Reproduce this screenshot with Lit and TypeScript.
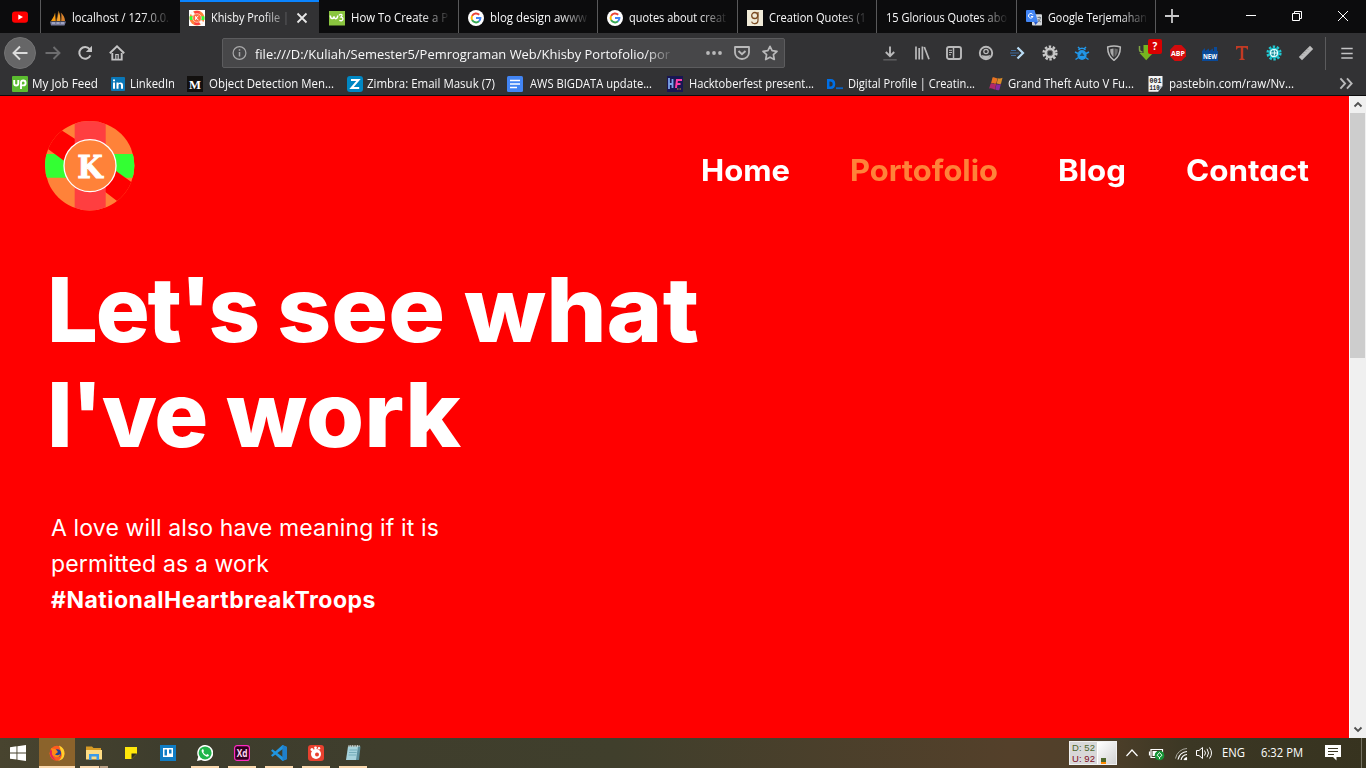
import { LitElement, html, css, svg, nothing } from "lit";
import { customElement, property } from "lit/decorators.js";
import { styleMap } from "lit/directives/style-map.js";

/** One line of text that spans `w` pixels, by tracking or, with `stretch`, by glyph width. */
@customElement("fit-text")
class FitText extends LitElement {
  @property({ type: Number }) w = 0;
  @property() text = "";
  @property({ type: Boolean }) stretch = false;
  static styles = css`
    :host { display: inline-block; white-space: pre; flex: none; }
    .t { display: inline-block; transform-origin: 0 50%; }
  `;
  render() {
    return html`<span class="t">${this.text}</span>`;
  }
  firstUpdated() {
    this.fit();
    document.fonts?.ready.then(() => this.fit());
  }
  fit() {
    const el = this.renderRoot.querySelector(".t") as HTMLElement;
    el.style.letterSpacing = "0px";
    el.style.transform = "none";
    const natural = el.getBoundingClientRect().width;
    if (this.stretch) {
      this.style.width = this.w + "px";
      el.style.transform = `scaleX(${(this.w / natural).toFixed(4)})`;
    } else {
      el.style.letterSpacing = ((this.w - natural) / this.text.length).toFixed(3) + "px";
    }
  }
}

const ico = (body: unknown, size = 16) =>
  html`<svg class="ico" width=${size} height=${size} viewBox="0 0 16 16">${body}</svg>`;

const gear = (color: string, hole: unknown) => svg`
  <circle cx="8" cy="8" r="5.4" fill=${color}/>
  <circle cx="8" cy="8" r="6.4" fill="none" stroke=${color} stroke-width="2.4" stroke-dasharray="2.4 1.62"/>
  ${hole}`;

const google = svg`
  <circle cx="8" cy="8" r="8" fill="#fff"/>
  <path d="M4.1 5.9A4.5 4.5 0 0 1 11.2 4.8" fill="none" stroke="#ea4335" stroke-width="2"/>
  <path d="M4.1 5.9A4.5 4.5 0 0 0 4.1 10.1" fill="none" stroke="#fbbc05" stroke-width="2"/>
  <path d="M4.1 10.1A4.5 4.5 0 0 0 11 11.3" fill="none" stroke="#34a853" stroke-width="2"/>
  <path d="M8 8H12.4A4.5 4.5 0 0 1 10.9 11.3" fill="none" stroke="#4285f4" stroke-width="2"/>`;

const youtube = svg`<rect y="2.4" width="16" height="11.4" rx="3" fill="#f00"/><path d="M6.3 5.4 11 8.1 6.3 10.8Z" fill="#fff"/>`;
const phpmyadmin = svg`
  <path d="M1 11C2 9 4 7 5 3L6 11Z" fill="#f89c0e"/>
  <path d="M6.2 11C7.5 7 8 4 8.500 .8C10 4 10.600 8 10.500 11Z" fill="#f5a12b"/>
  <path d="M11 11C11.500 7 11.300 5 10.800 2.500C13.500 5 15 8 15 11Z" fill="#d9822b"/>
  <path d="M5.200 3 6 11M8.600 1 6.300 11M11 3 11 11" stroke="#5b3a1a" stroke-width=".6"/>
  <path d="M0 11.500H16L14.500 15.500H1Z" fill="#777b9c"/>
  <path d="M2 13H5M6.500 13H9.500M11 13H14" stroke="#c9cce0" stroke-width="1"/>`;
const khisby = svg`
  <rect width="16" height="16" fill="#fff"/><circle cx="8" cy="8" r="7.5" fill="#ff8239"/>
  <path d="M5.500 1H10.500V15H5.500Z" fill="#ff3e40"/><path d="M.6 6.200H4V10H.8ZM12 6.200H15.400V10H12Z" fill="#3f3"/>
  <path d="M1.800 3.500 4 1.500 6 4 3 6ZM14.200 12.500 12 14.500 10 12 13 10Z" fill="#fff"/>
  <circle cx="8" cy="8" r="4.300" fill="#ff6a3c" stroke="#ffd9c4" stroke-width=".8"/>
  <path d="M6.700 6V10M9.400 6 6.900 8 9.500 10" stroke="#fff" fill="none"/>`;
const w3 = svg`<rect y="1" width="16" height="14.500" fill="#8ac53f"/>
  <path d="M1.300 5.500C1.500 9.500 4.500 9.500 5 6.300C5 9.500 8.500 9.600 8.800 5.500" stroke="#fff" stroke-width="1.500" fill="none"/>
  <path d="M10 5.300C12 3.500 14.500 4.500 12 7C15 7.200 14.500 12 10.300 10.400" stroke="#fff" stroke-width="1.300" fill="none"/>`;
const goodreads = svg`<rect width="16" height="16" fill="#f0ead7"/><circle cx="7.700" cy="5.500" r="3" fill="none" stroke="#7a4a22" stroke-width="1.300"/>
  <path d="M11 2V10.500C11 14.500 5.200 14.500 4.600 11.700" fill="none" stroke="#7a4a22" stroke-width="1.200"/>`;
const translate = svg`<rect x="6" y="4.200" width="10" height="11.300" rx="1" fill="#d5d8dc"/>
  <path d="M1 0H8.500L12 12H1Q0 12 0 11V1Q0 0 1 0Z" fill="#4285f4"/><path d="M8 12H12L9.500 15Z" fill="#2a56c6"/>
  <path d="M6.800 4.600A2.300 2.300 0 1 0 7 6.500H5" fill="none" stroke="#fff" stroke-width="1"/>
  <path d="M11.500 7.500H15M13.200 6.500V7.500M14.500 7.500C14 10 13 11 12 12M12 9C12.500 10.500 13.500 11.500 15 12" stroke="#6a737c" stroke-width=".9" fill="none"/>`;

const lbl = (t: string, x: number, y: number, fs: number, fill: string, len: number, fam = "Open Sans", w = 700) =>
  svg`<text x=${x} y=${y} font-family="${fam}, sans-serif" font-weight=${w} font-size=${fs} fill=${fill} textLength=${len} lengthAdjust="spacingAndGlyphs">${t}</text>`;

const TABS = [
  { x: 40, end: 180, icon: phpmyadmin, text: "localhost / 127.0.0.", w: 97, clip: 98 },
  { x: 180, end: 319, icon: khisby, text: "Khisby Profile |", w: 78, clip: 80, active: true },
  { x: 319, end: 458, icon: w3, text: "How To Create a P", w: 97, clip: 98 },
  { x: 458, end: 597, icon: google, text: "blog design awww", w: 97, clip: 98 },
  { x: 597, end: 737, icon: google, text: "quotes about creat", w: 97, clip: 98 },
  { x: 737, end: 876, icon: goodreads, text: "Creation Quotes (1", w: 97, clip: 98 },
  { x: 876, end: 1016, icon: null, text: "15 Glorious Quotes abo", w: 121, clip: 121 },
  { x: 1016, end: 1155, icon: translate, text: "Google Terjemahan", w: 99, clip: 99 },
];

const BOOKMARKS = [
  { x: 12, tx: 32, w: 66, text: "My Job Feed", icon: svg`<rect width="16" height="16" rx="1" fill="#5bbc2f"/><path d="M2.200 4V7.500Q2.200 9.500 4.200 9.500T6.300 7.500V4M9 13V6.800Q9 4.500 11.300 4.500T13.600 7Q13.600 9.400 11.300 9.400H9.500" fill="none" stroke="#fff" stroke-width="1.900"/>` },
  { x: 110, tx: 130, w: 45, text: "LinkedIn", icon: svg`<rect x="1" y="1" width="14" height="14" rx="1" fill="#0a77b7"/><path d="M3 6.500H5V12.800H3ZM3 3.500H5V5.300H3ZM6.500 6.500H8.500V7.400C9.500 5.900 13 6 13 9V12.800H11V9.500C11 7.600 8.500 7.600 8.500 9.500V12.800H6.500Z" fill="#fff"/>` },
  { x: 187, tx: 209, w: 125, text: "Object Detection Men...", icon: svg`<rect width="16" height="16" fill="#12100e"/>${lbl("M", 2, 12.6, 13, "#fff", 12, "Liberation Serif")}` },
  { x: 347, tx: 367, w: 128, text: "Zimbra: Email Masuk (7)", icon: svg`<rect width="16" height="16" rx="3" fill="#0087c3"/><path d="M4 3.900H11.500L4.500 12.100H12.200" fill="none" stroke="#fff" stroke-width="2"/>` },
  { x: 507, tx: 530, w: 122, text: "AWS BIGDATA update...", icon: svg`<rect width="16" height="16" rx="1.500" fill="#4285f4"/><path d="M3 4.500H13M3 8H13M3 11.500H10" stroke="#fff" stroke-width="1.500"/>` },
  { x: 667, tx: 689, w: 125, text: "Hacktoberfest present...", icon: svg`<rect width="16" height="16" fill="#191652"/><path d="M2 2V13M5.500 3V12M2 8H6" stroke="#7ba3e8" stroke-width="1.800"/><path d="M9 12 10 4H15M9.500 8H13.500" stroke="#ff3fa8" stroke-width="2" fill="none"/><path d="M10 13H14" stroke="#9a6b36" stroke-width="1.500" stroke-dasharray="1.500 1"/>` },
  { x: 827, tx: 848, w: 127, text: "Digital Profile | Creatin...", icon: svg`<path d="M1.200 4.200H3.500Q7 4.200 7 8T3.500 11.800H1.200Z" fill="none" stroke="#006fe6" stroke-width="2.500"/><path d="M9 12.200H16" stroke="#0b63c6" stroke-width="1.800"/>` },
  { x: 988, tx: 1008, w: 126, text: "Grand Theft Auto V Fu...", icon: svg`<path d="M4.500 1.500C7 .6 7.500 2.800 9.600 2L8.300 7.600C6.500 8.200 5.600 6.600 3 7.400Z" fill="#e87322"/><path d="M9.900 2.200C12 2.800 13 2.500 14.500 1.800L13 7.700C11.500 8.200 10.500 8.200 8.700 7.600Z" fill="#d98b28"/><path d="M2.700 7.600C5 7 6 8.600 8.200 7.800L7 13.400C5 13.500 3.500 11.500 1 12.700Z" fill="#b0286b"/><path d="M8.500 7.900C10.500 8.600 11.500 8.500 12.900 8L11.300 14C10 14.500 8.800 14.200 7.200 13.400Z" fill="#8b2aa0"/>` },
  { x: 1148, tx: 1169, w: 125, text: "pastebin.com/raw/Nv...", icon: svg`<path d="M.5 0H14.500V10L10 15.800H.5Z" fill="#f4f4f4"/><path d="M14.500 10H10V15.800Z" fill="#b7bfc6"/>${lbl("001", 1.5, 6.800, 7, "#222", 12, "Liberation Mono")}${lbl("110", 1.5, 13.600, 7, "#222", 10, "Liberation Mono")}` },
];

const g = "#b9b9ba";
const TOOLS = [
  svg`<path d="M8 1.500V11M3.800 7 8 11.200 12.200 7" fill="none" stroke=${g} stroke-width="1.900"/><path d="M1.300 14.800H14.700" stroke="#5a5a5c" stroke-width="1.600"/>`,
  svg`<path d="M2 1.500V14.500M5.200 3V14.500M8.400 1.500V14.500M10.300 2 15 14.300" stroke=${g} stroke-width="1.700" fill="none"/>`,
  svg`<rect x="1" y="2" width="14" height="12" rx="2" fill="none" stroke=${g} stroke-width="1.900"/><path d="M7.500 2V14" stroke=${g} stroke-width="1.500"/><path d="M3 5.300H6M3 7.500H6M3 9.700H5" stroke=${g}/>`,
  svg`<circle cx="8" cy="8" r="6.200" fill="none" stroke=${g} stroke-width="1.900"/><circle cx="8" cy="6.500" r="2.800" fill=${g}/><path d="M3.500 10Q8 11.500 12.500 10Q11 14 8 14T3.500 10Z" fill=${g}/><circle cx="8" cy="6.500" r="1.500" fill="#323234"/>`,
  svg`<path d="M1 5.500H6M0 8H9M1 10.500H6" stroke="#3e6b9c" stroke-width="1.100"/><path d="M7.500 2.500 13 8 7.500 13.500" fill="none" stroke="#b9dcf5" stroke-width="2.200"/>`,
  gear("#c9c9c9", svg`<circle cx="8" cy="8" r="2.800" fill="#323234" stroke="#777"/>`),
  svg`<ellipse cx="8" cy="10" rx="4.600" ry="5" fill="#2196e8"/><path d="M4.500 5Q8 1.500 11.500 5M4 2 6 4M12 2 10 4M1 7 4 8.500M15 7 12 8.500M1.500 14.500 4.500 12.500M14.500 14.500 11.500 12.500" stroke="#2196e8" stroke-width="1.500" fill="none"/><path d="M8 7.500 10.500 11H5.500Z" fill="#24506f"/>`,
  svg`<path d="M1.700 2Q8 .2 14.300 2Q14.500 11 8 15.300Q1.500 11 1.700 2Z" fill="none" stroke="#bbb" stroke-width="1.500"/><path d="M4.200 4.200Q6 3.500 7.500 3.500V12.300Q4 9 4.200 4.200Z" fill="#a9a9a9"/><path d="M8.500 3.500Q10 3.500 11.800 4.200Q12 9 8.500 12.300Z" fill="#6c6c6c"/>`,
  svg`<path d="M5.500 0H11V8H15L8.200 15.200 1.500 8H5.500Z" fill="#76b51f"/><path d="M1.500 1V4.500Q1.500 7 4.500 7" stroke="#7fa544" stroke-width="1.500" fill="none"/>`,
  svg`<path d="M4.700 0H11.300L16 4.700V11.300L11.300 16H4.700L0 11.300V4.700Z" fill="#d30b0d"/>${lbl("ABP", 1, 10.9, 7.8, "#fff", 14)}`,
  svg`<path d="M0 16V6L3 3V6L7 3.500V6L11 3.500V6H12V2H15V6H16V16Z" fill="#0a4a99"/>${lbl("NEW", 1, 14.2, 6.800, "#fff", 14)}`,
  svg`<path d="M2 1H14V4.500H13Q13 2.700 11 2.700H9.200V13Q9.200 14 10.700 14.300V15H5.300V14.300Q6.800 14 6.800 13V2.700H5Q3 2.700 3 4.500H2Z" fill="#c23a24"/>`,
  gear("#20c5cf", svg`<circle cx="8" cy="8" r="3.500" fill="#168b98" stroke="#e8ffff" stroke-width="1.200"/><path d="M5 8H11M8 5Q9.500 8 8 11" stroke="#e8ffff" fill="none"/>`),
  svg`<path d="M12 .8 15.200 4 4 15.200 .8 12Z" fill="#bdbdbd"/><path d="M9.500 4 10.500 5M7.500 6 8.500 7M5.500 8 6.500 9M3.500 10 4.500 11" stroke="#888" stroke-width=".7"/>`,
];

const TASKS = [
  { run: false, icon: svg`<path d="M0 2.300 6.500 1.300V7.500H0ZM7.400 1.200 16 0V7.500H7.400ZM0 8.400H6.500V14.600L0 13.700ZM7.400 8.400H16V16L7.400 14.800Z" fill="#fff"/>` },
  { run: true, active: true, icon: svg`<circle cx="8" cy="8.300" r="7.500" fill="#ff5a1f"/><path d="M10 .5Q16 3 15.500 9T9 15.800Q14 13 12.500 8T10 .5Z" fill="#ffd12e"/><path d="M1 5Q0 13 7 15.500Q2 11 4 6Z" fill="#e3205c"/><circle cx="8" cy="8.300" r="4" fill="#20439b"/><path d="M2 3Q4.500 4 6.500 4L9 7 6 9.500Q9 11 11.500 9Q10 13.500 6 12T3 6Z" fill="#ff8a16"/>` },
  { run: true, group: true, icon: svg`<path d="M0 1.500H6L7.500 3H15V7H0Z" fill="#d79b25"/><path d="M0 5H16V14.500H0Z" fill="#fddc84"/><path d="M3 15V9H13V15H10.500V11.500H5.500V15Z" fill="#3d9be9"/>` },
  { run: false, icon: svg`<path d="M2 2H14V8.500L8.500 14H2Z" fill="#ffe70a"/><path d="M14 8.500H8.500V14Z" fill="#2f2d20"/>` },
  { run: false, icon: svg`<rect width="16" height="16" fill="#0f7cc4"/><rect x="3" y="3" width="10" height="9" fill="#fff"/><path d="M4.500 4.500H7V10.500H4.500ZM9 4.500H11.500V8.500H9Z" fill="#0f7cc4"/>` },
  { run: true, icon: svg`<path d="M0 16 1.200 11.800A8 8 0 1 1 4.200 14.900Z" fill="#fff"/><circle cx="8.100" cy="7.900" r="6.500" fill="#20b549"/><path d="M5.300 4.200Q4 5.300 4.900 7.300Q6.500 10.700 9.800 11.700Q12 11.700 12 9.900L10.200 9 9.200 10Q7 9 6.200 7.100L7 6.200 6.300 4.200Z" fill="#fff"/>` },
  { run: true, icon: svg`<rect x=".6" y=".6" width="14.800" height="14.800" rx="2.500" fill="#31001f" stroke="#ff2bc2" stroke-width="1.200"/>${lbl("Xd", 2.7, 11.7, 9.8, "#ffd9f2", 10.8)}` },
  { run: true, icon: svg`<path d="M11.500 0 16 2V14L11.500 16 0 5.800 1.500 4.300 11.700 12V4L1.500 11.700 0 10.200Z" fill="#2196e0"/><path d="M11.500 0 16 2V14L11.500 16Z" fill="#1f7fcb"/>` },
  { run: true, icon: svg`<rect width="16" height="16" rx="3" fill="#e8412f"/><circle cx="8" cy="9" r="5" fill="#fff"/><circle cx="9" cy="9.500" r="2" fill="#e8412f"/><circle cx="4" cy="4.500" r="1.500" fill="#fff"/><circle cx="7.500" cy="2.800" r="1.400" fill="#fff"/><circle cx="11" cy="3.300" r="1.200" fill="#fff"/>` },
  { run: true, icon: svg`<path d="M3 1.500H15L13 15H1Z" fill="#a7d3dc"/><path d="M13 1.500H15.500L14 15H11Z" fill="#5c8f9c"/><path d="M4.500 5H12M4 7.500H11.600M3.600 10H11.300" stroke="#6fa8b5" stroke-width=".9"/><path d="M3.500 1H14.500" stroke="#e9f1f2" stroke-width="1.600" stroke-dasharray="1 .7"/>` },
];

@customElement("app-root")
class AppRoot extends LitElement {
  static styles = css`
    :host { display: flex; flex-direction: column; width: 1366px; height: 768px; overflow: hidden;
      font-family: "Open Sans", "Noto Sans", sans-serif; font-size: 12px; color: #f9f9fa; }
    * { box-sizing: border-box; }
    svg { display: block; flex: none; }
    .tabs { display: flex; height: 33px; background: #0c0c0d; flex: none; }
    .pin { width: 40px; display: flex; align-items: center; padding-left: 12px; }
    .tab { display: flex; align-items: center; border-left: 1px solid #59595a; padding: 2px 0 0 9px; flex: none; }
    .tab.active { background: #323234; border-left: 0; border-top: 2px solid #0a84ff; padding-top: 0; }
    .tab.active + .tab { border-left-color: #0c0c0d; }
    .tab .ico { margin-right: 6px; }
    .fade { overflow: hidden; display: flex; line-height: 18px;
      -webkit-mask-image: linear-gradient(90deg, #000 calc(100% - 28px), rgba(0, 0, 0, 0.06));
      mask-image: linear-gradient(90deg, #000 calc(100% - 28px), rgba(0, 0, 0, 0.06)); }
    .close { margin-left: 5px; }
    .newtab { border-left: 1px solid #59595a; width: 73px; padding: 8px 0 0 8px; }
    .win { display: flex; flex: 1; }
    .win svg { margin: 11px 18px 0; }
    .bar { display: flex; height: 39px; background: #323234; align-items: center; flex: none; padding: 1px 0 0 4px; }
    .back { width: 32px; height: 32px; margin-right: 1px; border-radius: 50%; background: #666667; border: 1px solid #737374; display: flex; align-items: center; justify-content: center; }
    .btn { width: 32px; display: flex; justify-content: center; }
    .url { display: flex; align-items: center; width: 563px; height: 30px; margin-left: 89px; padding-left: 9px;
      background: #474749; border: 1px solid #5c5c5e; border-radius: 2px; font-size: 13.5px; }
    .url .fade { width: 418px; margin-left: 7px; padding-top: 1px; line-height: 22px; }
    .url .acts { display: flex; gap: 12px; margin-left: 33px; }
    .tools { display: flex; margin-left: 89px; }
    .badged { position: relative; }
    .badge { position: absolute; left: 18px; top: -6px; width: 14px; height: 15px; border-radius: 2px; background: #d90000;
      font-size: 10px; font-weight: 700; line-height: 14px; text-align: center; color: #fff; }
    .menu { border-left: 1px solid #5b5b5d; height: 33px; margin-left: 3px; padding-left: 13px; display: flex; align-items: center; }
    .marks { display: flex; height: 24px; padding-left: 12px; background: #323234; border-bottom: 1px solid #0c0c0d; align-items: center; flex: none; line-height: 18px; }
    .mark { display: flex; align-items: center; flex: none; }
    .view { display: flex; flex: 1; min-height: 0; }
    .page { flex: 1; background: #f00; color: #fff; font-family: Inter, sans-serif; }
    .head { display: flex; justify-content: space-between; height: 161px; padding: 20px 40px 0 40px; }
    .nav { display: flex; gap: 60px; font-size: 29.500px; font-weight: 700; line-height: 40px; padding-top: 34px; font-feature-settings: "cv11"; }
    .on { color: #ff8239; }
    .hero { padding-left: 51px; }
    .title { margin: 0 0 43px -4px; font-size: 90px; font-weight: 800; line-height: 105px; display: flex; flex-direction: column; align-items: flex-start; }
    .row { display: flex; height: 105px; gap: 19px; }
    .text { font-size: 23px; line-height: 36px; display: flex; flex-direction: column; align-items: flex-start; margin: 0; }
    .strong { font-weight: 700; }
    .scroll { width: 17px; background: #f0f0f0; display: flex; flex-direction: column; border-left: 1px solid #fff; }
    .scroll .track { flex: 1; padding-right: 1px; }
    .thumb { height: 245px; background: #cdcdcd; }
    .task { display: flex; height: 30px; flex: none; background: linear-gradient(90deg, #48442f, #3e3d2d 12%, #403f2c 45%, #54402a 74%, #50402a 80%, #3b3724 87%, #37331f); }
    .app { width: 37px; display: flex; flex-direction: column; align-items: center; padding-top: 7px; height: 30px; }
    .app:first-child { width: 36px; margin-right: 3px; }
    .app.active { background: #8b632b; width: 36px; }
    .line { width: 28px; height: 2px; margin-top: 5px; background: #fbd9ae; }
    .app.active .line { width: 36px; }
    .line.group { background: linear-gradient(90deg, #fbd9ae 19px, #6d5d48 19px 20px, #bba186 20px); }
    .tray { display: flex; margin-left: auto; align-items: center; }
    .meter { display: flex; width: 48px; height: 24px; background: #d8d8d8; border: 1px solid #f1f1f1; font: 9.500px/11px "Liberation Sans", sans-serif; color: #4e672c; }
    .meter .nums { width: 28px; padding-left: 2px; border-right: 1px solid #fff; display: flex; flex-direction: column; }
    .meter .up { color: #7e0c20; }
    .meter .graph { flex: 1; display: flex; flex-direction: column; justify-content: flex-end; padding-left: 3px; background: linear-gradient(135deg, #fff, #d2d2d2); }
    .graph .a { width: 5px; height: 4px; background: #4e672c; }
    .graph .b { width: 5px; height: 2px; background: #ff8a00; }
  `;

  tab(t: (typeof TABS)[number]) {
    return html`<div class="tab ${(t as any).active ? "active" : ""}" style=${styleMap({ width: t.end - t.x + "px" })}>
      ${t.icon ? ico(t.icon) : nothing}
      <div class="fade" style=${styleMap({ width: t.clip + "px" })}><fit-text stretch w=${t.w} text=${t.text}></fit-text></div>
      ${(t as any).active ? html`<svg class="close" width="12" height="12" viewBox="0 0 12 12"><path d="M1.500 1.500 10.500 10.500M10.500 1.500 1.500 10.500" stroke="#e8e8e8" stroke-width="1.800"/></svg>` : nothing}
    </div>`;
  }

  mark(m: (typeof BOOKMARKS)[number], i: number) {
    const next = BOOKMARKS[i + 1]?.x ?? 1339;
    return html`<div class="mark" style=${styleMap({ width: next - m.x + "px" })}>
      ${ico(m.icon)}
      <fit-text stretch style=${styleMap({ marginLeft: m.tx - m.x - 16 + "px" })} w=${m.w} text=${m.text}></fit-text>
    </div>`;
  }

  logo() {
    return html`<svg width="100" height="100" viewBox="40 116 100 100">
      <defs><clipPath id="disc"><circle cx="89.700" cy="165.700" r="44.700"/></clipPath></defs>
      <g clip-path="url(#disc)">
        <path d="M40 116H140V216H40Z" fill="#ff8239"/>
        <path d="M40 154H140V177.700H40Z" fill="#3f3"/>
        <path d="M36 140.500 48.300 149.300 64 160.700 105 191.700 116.700 200.700 130 211 150 195 131 181.700 116 171 76.700 140 62.300 130.700 50 122.500Z" fill="#f00"/>
        <path d="M74.700 116H105.700V216H74.700Z" fill="#ff3e40"/>
      </g>
      <circle cx="90" cy="165.700" r="26" fill="#ff8239" stroke="#fff" stroke-width="1.300"/>
      <text x="77.300" y="177.500" font-family="'DejaVu Serif', serif" font-weight="700" font-size="32" fill="#fff" stroke="#fff" stroke-width=".9" textLength="25.500" lengthAdjust="spacingAndGlyphs">K</text>
    </svg>`;
  }

  render() {
    return html`
      <div class="tabs">
        <div class="pin">${ico(youtube)}</div>
        ${TABS.map((t) => this.tab(t))}
        <div class="newtab">${ico(svg`<path d="M8 1V15M1 8H15" stroke="#c9c9ca" stroke-width="1.800"/>`)}</div>
        <div class="win">
          <svg width="10" height="10" viewBox="0 0 10 10"><path d="M0 4.500H10" stroke="#fff"/></svg>
          <svg width="10" height="10" viewBox="0 0 10 10"><path d="M.5 2.500H7.500V9.500H.5ZM2.500 2.500V.5H9.500V7.500H7.500" fill="none" stroke="#fff"/></svg>
          <svg width="10" height="10" viewBox="0 0 10 10"><path d="M0 0 10 10M10 0 0 10" stroke="#fff"/></svg>
        </div>
      </div>
      <div class="bar">
        <div class="back">${ico(svg`<path d="M15.500 8H1.500M8 1.500 1.500 8 8 14.500" fill="none" stroke="#dcdcdc" stroke-width="1.900"/>`)}</div>
        <div class="btn">${ico(svg`<path d="M.5 8H14.500M8.500 2 14.500 8 8.500 14" fill="none" stroke="#6d6d6f" stroke-width="1.900"/>`)}</div>
        <div class="btn">${ico(svg`<path d="M12.600 4.200A5.800 5.800 0 1 0 13.400 10.300" fill="none" stroke="#c4c4c5" stroke-width="2"/><path d="M15 .8V7H8.800Z" fill="#c4c4c5"/>`)}</div>
        <div class="btn">${ico(svg`<path d="M.8 8.300 8 1.300 15.200 8.300" fill="none" stroke="#c4c4c5" stroke-width="1.900"/><path d="M3.300 8V14.600H12.700V8" fill="none" stroke="#c4c4c5" stroke-width="1.900"/><path d="M6.800 14V9.500H9.200V14" fill="none" stroke="#c4c4c5" stroke-width="1.200"/>`)}</div>
        <div class="url">
          ${ico(svg`<circle cx="7.500" cy="8" r="6.400" fill="none" stroke="#a9a9aa" stroke-width="1.200"/><path d="M7.500 7V11.500M7.500 4.300V5.800" stroke="#a9a9aa" stroke-width="1.500"/>`)}
          <div class="fade"><fit-text stretch w="415" text="file:///D:/Kuliah/Semester5/Pemrograman Web/Khisby Portofolio/por"></fit-text></div>
          <div class="acts">
            ${ico(svg`<circle cx="2" cy="8" r="1.900" fill="#b9b9ba"/><circle cx="8" cy="8" r="1.900" fill="#b9b9ba"/><circle cx="14" cy="8" r="1.900" fill="#b9b9ba"/>`)}
            ${ico(svg`<path d="M1 2H15V7.500A7 6.500 0 0 1 1 7.500Z" fill="none" stroke="#b9b9ba" stroke-width="1.800" stroke-linejoin="round"/><path d="M4.500 6 8 9.300 11.500 6" fill="none" stroke="#b9b9ba" stroke-width="1.900"/>`)}
            ${ico(svg`<path d="M8 1.300 10.100 5.700 15 6.300 11.400 9.700 12.300 14.500 8 12.200 3.700 14.500 4.600 9.700 1 6.300 5.900 5.700Z" fill="none" stroke="#b9b9ba" stroke-width="1.700" stroke-linejoin="round"/>`)}
          </div>
        </div>
        <div class="tools">
          ${TOOLS.map((t, i) => html`<div class="btn ${i === 8 ? "badged" : ""}">${ico(t)}${i === 8 ? html`<span class="badge">?</span>` : nothing}</div>`)}
        </div>
        <div class="menu">${ico(svg`<path d="M2.300 3.500H13.700M2.300 8.500H13.700M2.300 13H13.700" stroke="#c4c4c5" stroke-width="1.700"/>`)}</div>
      </div>
      <div class="marks">
        ${BOOKMARKS.map((m, i) => this.mark(m, i))}
        ${ico(svg`<path d="M1.500 2.500 6.500 8 1.500 13.500M8.500 2.500 13.500 8 8.500 13.500" fill="none" stroke="#b9b9ba" stroke-width="2"/>`, 15)}
      </div>
      <div class="view">
        <div class="page">
          <div class="head">
            ${this.logo()}
            <div class="nav">
              <fit-text stretch w="89" text="Home"></fit-text>
              <fit-text stretch class="on" w="148" text="Portofolio"></fit-text>
              <fit-text stretch w="68" text="Blog"></fit-text>
              <fit-text stretch w="123" text="Contact"></fit-text>
            </div>
          </div>
          <div class="hero">
            <h1 class="title">
              <div class="row">
                <fit-text w="211" text="Let's"></fit-text>
                <fit-text stretch w="168" text="see"></fit-text>
                <fit-text stretch w="235" text="what"></fit-text>
              </div>
              <div class="row">
                <fit-text w="160" text="I've"></fit-text>
                <fit-text stretch w="235" text="work"></fit-text>
              </div>
            </h1>
            <p class="text">
              <fit-text w="388" text="A love will also have meaning if it is"></fit-text>
              <fit-text w="218" text="permitted as a work"></fit-text>
              <fit-text class="strong" w="325" text="#NationalHeartbreakTroops"></fit-text>
            </p>
          </div>
        </div>
        <div class="scroll">
          <svg width="16" height="17" viewBox="0 0 16 17"><path d="M4.500 10.500 8 7 11.500 10.500" fill="none" stroke="#505050" stroke-width="1.800"/></svg>
          <div class="track"><div class="thumb"></div></div>
          <svg width="16" height="17" viewBox="0 0 16 17"><path d="M4.500 6.500 8 10 11.500 6.500" fill="none" stroke="#505050" stroke-width="1.800"/></svg>
        </div>
      </div>
      <div class="task">
        ${TASKS.map((t) => html`<div class="app ${(t as any).active ? "active" : ""}">${ico(t.icon)}${t.run ? html`<div class="line ${(t as any).group ? "group" : ""}"></div>` : nothing}</div>`)}
        <div class="tray">
          <div class="meter">
            <div class="nums"><fit-text w="23" text="D: 52"></fit-text><fit-text class="up" w="23" text="U: 92"></fit-text></div>
            <div class="graph"><div class="a"></div><div class="b"></div></div>
          </div>
          <svg width="249" height="30" viewBox="1117 738 249 30" fill="none" stroke="#fff">
            <path d="M1126.500 756 1132 750 1137.500 756" stroke-width="1.200"/>
            <path d="M1151 749.500H1162.500V757.500H1151ZM1149.500 751.500V755.500" stroke-width="1.200"/><path d="M1152.500 751H1157V756H1152.500Z" fill="#fff" stroke="none"/>
            <circle cx="1159.500" cy="755.500" r="4.800" fill="#159435" stroke="none"/><path d="M1159.500 752.500 1162 755.300 1159.500 757.500 1157 755.300ZM1159.500 757V759" stroke-width=".9"/>
            <path d="M1175.500 758.500A12 12 0 0 1 1187 748.500" stroke="#aaa89e"/><path d="M1178 759.500A10 10 0 0 1 1187 751.500M1181 760A7 7 0 0 1 1187 754.500M1184 760A4 4 0 0 1 1187 757.500" stroke-width="1.200"/><circle cx="1186" cy="759" r="1.200" fill="#fff" stroke="none"/>
            <path d="M1196.500 750.500H1199L1202.500 747.500V758.500L1199 755.500H1196.500ZM1204.500 750.500Q1206.500 753 1204.500 755.500M1207 748.800Q1210 753 1207 757.200M1209.500 747.500Q1213.500 753 1209.500 758.500"/>
            <g stroke="none" fill="#fff" font-family="Open Sans, sans-serif" font-size="12">
              <text x="1222" y="757" textLength="23" lengthAdjust="spacingAndGlyphs">ENG</text>
              <text x="1261" y="757" textLength="42" lengthAdjust="spacingAndGlyphs">6:32 PM</text>
            </g>
            <path d="M1325 745H1341V757H1336.500V760.500L1333 757H1325Z" fill="#fff" stroke="none"/><path d="M1328 748.500H1338M1328 751.500H1338M1328 754.500H1334" stroke="#3b3724"/>
            <path d="M1361.500 738V768" stroke="#757263"/>
          </svg>
        </div>
      </div>
    `;
  }
}
